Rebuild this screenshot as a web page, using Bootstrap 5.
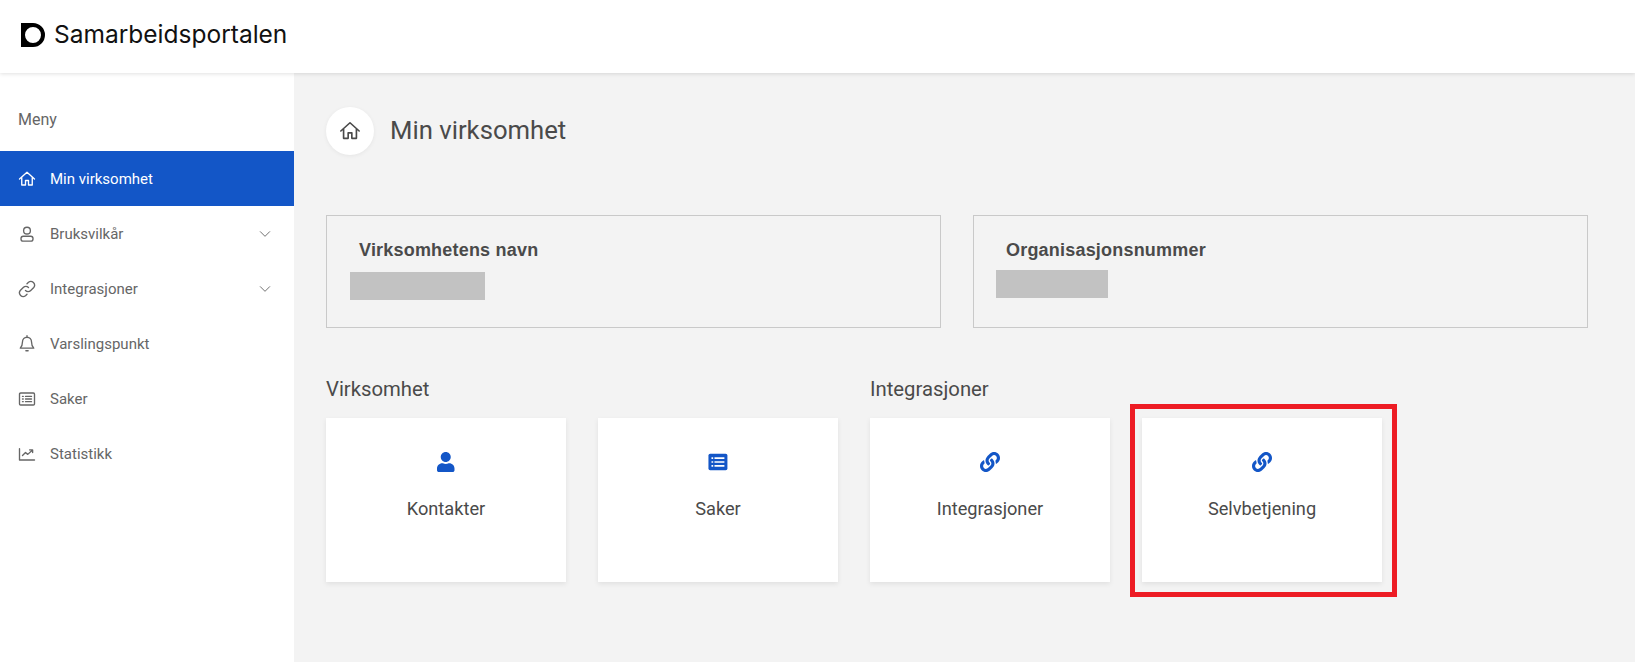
<!DOCTYPE html>
<html lang="en">
<head>
  <meta charset="UTF-8" />
  <meta name="viewport" content="width=device-width, initial-scale=1" />
  <title>Samarbeidsportalen</title>
  <link href="https://cdn.jsdelivr.net/npm/bootstrap@5.3.3/dist/css/bootstrap.min.css" rel="stylesheet" />
  <style>
    body { font-family: Roboto, "Liberation Sans", sans-serif; background: #f3f3f3; color: #4a4a4a; height: 662px; overflow: hidden; }
    .top-bar { height: 73px; padding: 0 21px 4px; position: relative; z-index: 2; box-shadow: 0 1px 4px rgba(0,0,0,.12); }
    .brand-name { font-family: Inter, sans-serif; font-size: 24.5px; color: #111; margin-left: 9px; }
    .side-menu { width: 294px; height: 589px; flex: none; }
    .menu-title { height: 78px; padding: 0 18px 19px; font-size: 16px; color: #666; }
    .menu-row { height: 55px; padding: 1px 18px 0; font-size: 15px; color: #666; text-decoration: none; }
    .menu-row.is-active { background: #1356c7; color: #fff; }
    .menu-row svg.row-icon { width: 18px; height: 18px; margin-right: 14px; flex: none; }
    .menu-row svg.row-caret { width: 14px; height: 14px; margin-left: auto; margin-right: 4px; stroke-width: 1.6; }
    .line-icon { fill: none; stroke: currentColor; stroke-width: 1.8; stroke-linecap: round; stroke-linejoin: round; }
    .page-body { padding: 34px 47px 0 32px; flex: 1; }
    .title-circle { width: 48px; height: 48px; box-shadow: 0 1px 4px rgba(0,0,0,.06); color: #4a4a4a; }
    .title-circle svg { width: 22px; height: 22px; }
    .page-title { font-size: 25.7px; font-weight: 400; margin: 0 0 0 16px; padding-bottom: 1px; }
    .info-row { margin-top: 60px; gap: 32px; }
    .info-box { flex: 1; height: 113px; border: 1px solid #c9c9c9; }
    .info-label { font-family: "Liberation Sans", sans-serif; font-size: 18px; font-weight: 700; letter-spacing: .2px; padding: 21px 0 0 32px; }
    .hidden-value { background: #c2c2c2; height: 28px; }
    .box-a .hidden-value { width: 135px; margin: 8px 0 0 23px; }
    .box-b .hidden-value { width: 112px; margin: 6px 0 0 22px; }
    .group-row { margin-top: 46px; gap: 32px; }
    .group-title { font-size: 20.3px; font-weight: 400; height: 44px; line-height: 30px; margin: 0; }
    .tile-row { gap: 32px; }
    .tile { width: 240px; height: 164px; background: #fff; box-shadow: 0 2px 5px rgba(0,0,0,.08); padding-top: 34px; font-size: 18.2px; position: relative; }
    .tile svg { height: 20px; color: #1356c7; display: block; margin: 0 auto 23px; }
    .tile-mark { position: absolute; top: -14px; left: -12px; right: -15px; bottom: -15px; border: 5px solid #ed1c24; }
  </style>
</head>
<body>

  <!-- HEADER -->
  <header class="top-bar bg-white d-flex align-items-center">
    <svg width="24" height="24" viewBox="0 0 24 24"><path fill="#000" fill-rule="evenodd" d="M0 0H12A12 12 0 0 1 12 24H0ZM12 4A8 8 0 1 0 12 20A8 8 0 1 0 12 4Z"/></svg>
    <span class="brand-name">Samarbeidsportalen</span>
  </header>

  <div class="d-flex">
    <!-- SIDEBAR -->
    <nav class="side-menu bg-white">
      <div class="menu-title d-flex align-items-end">Meny</div>
      <a class="menu-row is-active d-flex align-items-center" href="#">
        <svg class="row-icon line-icon" viewBox="0 0 24 24"><path d="M2 12 12 3l10 9M5 10v10h5v-6h4v6h5V10"/></svg>Min virksomhet
      </a>
      <a class="menu-row d-flex align-items-center" href="#">
        <svg class="row-icon line-icon" viewBox="0 0 24 24"><circle cx="12" cy="7.5" r="4.5"/><rect x="4" y="15" width="16" height="6.5" rx="3"/></svg>Bruksvilkår
        <svg class="row-caret line-icon" viewBox="0 0 24 24"><path d="M4 8l8 8 8-8"/></svg>
      </a>
      <a class="menu-row d-flex align-items-center" href="#">
        <svg class="row-icon line-icon" viewBox="0 0 24 24"><path d="M10 14a5 5 0 0 0 7 0l4-4a5 5 0 0 0-7-7l-2 2"/><path d="M14 10a5 5 0 0 0-7 0l-4 4a5 5 0 0 0 7 7l2-2"/></svg>Integrasjoner
        <svg class="row-caret line-icon" viewBox="0 0 24 24"><path d="M4 8l8 8 8-8"/></svg>
      </a>
      <a class="menu-row d-flex align-items-center" href="#">
        <svg class="row-icon line-icon" viewBox="0 0 24 24"><path d="M12 3a6 6 0 0 0-6 6c0 5-1 6.500-3 8.500h18c-2-2-3-3.500-3-8.500a6 6 0 0 0-6-6ZM12 1v2M10.500 21h3"/></svg>Varslingspunkt
      </a>
      <a class="menu-row d-flex align-items-center" href="#">
        <svg class="row-icon line-icon" viewBox="0 0 24 24"><rect x="2" y="4" width="20" height="16" rx="1.500"/><path d="M6 8.500h1M6 12h1M6 15.500h1M10 8.500h8M10 12h8M10 15.500h8"/></svg>Saker
      </a>
      <a class="menu-row d-flex align-items-center" href="#">
        <svg class="row-icon line-icon" viewBox="0 0 24 24"><path d="M2 5v15h20M6 14l4-4 3 2.500 6-5.500M15.500 6.500H19.500V10"/></svg>Statistikk
      </a>
    </nav>

    <!-- MAIN -->
    <main class="page-body">
      <div class="d-flex align-items-center">
        <div class="title-circle bg-white rounded-circle d-flex align-items-center justify-content-center">
          <svg class="line-icon" viewBox="0 0 24 24"><path d="M2 12 12 3l10 9M5 10v10h5v-6h4v6h5V10"/></svg>
        </div>
        <h1 class="page-title">Min virksomhet</h1>
      </div>

      <div class="info-row d-flex">
        <div class="info-box box-a">
          <div class="info-label">Virksomhetens navn</div>
          <div class="hidden-value"></div>
        </div>
        <div class="info-box box-b">
          <div class="info-label">Organisasjonsnummer</div>
          <div class="hidden-value"></div>
        </div>
      </div>

      <div class="group-row d-flex">
        <section>
          <h2 class="group-title">Virksomhet</h2>
          <div class="tile-row d-flex">
            <div class="tile text-center">
              <svg viewBox="0 0 448 512" fill="currentColor"><path d="M224 256c70.700 0 128-57.300 128-128S294.700 0 224 0 96 57.300 96 128s57.300 128 128 128zm89.600 32h-16.700c-22.200 10.200-46.900 16-72.900 16s-50.600-5.800-72.900-16h-16.700C60.200 288 0 348.200 0 422.400V464c0 26.500 21.500 48 48 48h352c26.500 0 48-21.500 48-48v-41.600c0-74.200-60.200-134.400-134.400-134.400z"/></svg>
              Kontakter
            </div>
            <div class="tile text-center">
              <svg viewBox="-3 -1.600 30 23.200"><rect x="1" y="0.500" width="22" height="19" rx="2" fill="currentColor"/><path fill="none" stroke="#fff" stroke-width="1.800" d="M4.500 5.500h2M4.500 10h2M4.500 14.500h2M8 5.500h11.500M8 10h11.500M8 14.500h11.500"/></svg>
              Saker
            </div>
          </div>
        </section>
        <section>
          <h2 class="group-title">Integrasjoner</h2>
          <div class="tile-row d-flex">
            <div class="tile text-center">
              <svg viewBox="0 0 512 512" fill="currentColor"><path d="M326.612 185.391c59.747 59.809 58.927 155.698.36 214.59-.11.12-.24.25-.36.37l-67.2 67.2c-59.27 59.27-155.699 59.262-214.96 0-59.27-59.26-59.27-155.7 0-214.96l37.106-37.106c9.84-9.84 26.786-3.3 27.294 10.606.648 17.722 3.826 35.527 9.69 52.721 1.986 5.822.567 12.262-3.783 16.612l-13.087 13.087c-28.026 28.026-28.905 73.66-1.155 101.96 28.024 28.579 74.086 28.749 102.325.51l67.2-67.19c28.191-28.191 28.073-73.757 0-101.83-3.701-3.694-7.429-6.564-10.341-8.569a16.037 16.037 0 0 1-6.947-12.606c-.396-10.567 3.348-21.456 11.698-29.806l21.054-21.055c5.521-5.521 14.182-6.199 20.584-1.731a152.482 152.482 0 0 1 20.522 17.197zM467.547 44.449c-59.261-59.262-155.69-59.27-214.96 0l-67.2 67.2c-.12.12-.25.25-.36.37-58.566 58.892-59.387 154.781.36 214.59a152.454 152.454 0 0 0 20.521 17.196c6.402 4.468 15.064 3.789 20.584-1.731l21.054-21.055c8.35-8.35 12.094-19.239 11.698-29.806a16.037 16.037 0 0 0-6.947-12.606c-2.912-2.005-6.64-4.875-10.341-8.569-28.073-28.073-28.191-73.639 0-101.83l67.2-67.19c28.239-28.239 74.3-28.069 102.325.51 27.75 28.3 26.872 73.934-1.155 101.96l-13.087 13.087c-4.35 4.35-5.769 10.79-3.783 16.612 5.864 17.194 9.042 34.999 9.69 52.721.509 13.906 17.454 20.446 27.294 10.606l37.106-37.106c59.271-59.259 59.271-155.699.001-214.959z"/></svg>
              Integrasjoner
            </div>
            <div class="tile text-center">
              <svg viewBox="0 0 512 512" fill="currentColor"><path d="M326.612 185.391c59.747 59.809 58.927 155.698.36 214.59-.11.12-.24.25-.36.37l-67.2 67.2c-59.27 59.27-155.699 59.262-214.96 0-59.27-59.26-59.27-155.7 0-214.96l37.106-37.106c9.84-9.84 26.786-3.3 27.294 10.606.648 17.722 3.826 35.527 9.69 52.721 1.986 5.822.567 12.262-3.783 16.612l-13.087 13.087c-28.026 28.026-28.905 73.66-1.155 101.96 28.024 28.579 74.086 28.749 102.325.51l67.2-67.19c28.191-28.191 28.073-73.757 0-101.83-3.701-3.694-7.429-6.564-10.341-8.569a16.037 16.037 0 0 1-6.947-12.606c-.396-10.567 3.348-21.456 11.698-29.806l21.054-21.055c5.521-5.521 14.182-6.199 20.584-1.731a152.482 152.482 0 0 1 20.522 17.197zM467.547 44.449c-59.261-59.262-155.69-59.27-214.96 0l-67.2 67.2c-.12.12-.25.25-.36.37-58.566 58.892-59.387 154.781.36 214.59a152.454 152.454 0 0 0 20.521 17.196c6.402 4.468 15.064 3.789 20.584-1.731l21.054-21.055c8.35-8.35 12.094-19.239 11.698-29.806a16.037 16.037 0 0 0-6.947-12.606c-2.912-2.005-6.64-4.875-10.341-8.569-28.073-28.073-28.191-73.639 0-101.83l67.2-67.19c28.239-28.239 74.3-28.069 102.325.51 27.75 28.3 26.872 73.934-1.155 101.96l-13.087 13.087c-4.35 4.35-5.769 10.79-3.783 16.612 5.864 17.194 9.042 34.999 9.69 52.721.509 13.906 17.454 20.446 27.294 10.606l37.106-37.106c59.271-59.259 59.271-155.699.001-214.959z"/></svg>
              Selvbetjening
              <div class="tile-mark"></div>
            </div>
          </div>
        </section>
      </div>
    </main>
  </div>

  <script src="https://cdn.jsdelivr.net/npm/bootstrap@5.3.3/dist/js/bootstrap.bundle.min.js"></script>
</body>
</html>
